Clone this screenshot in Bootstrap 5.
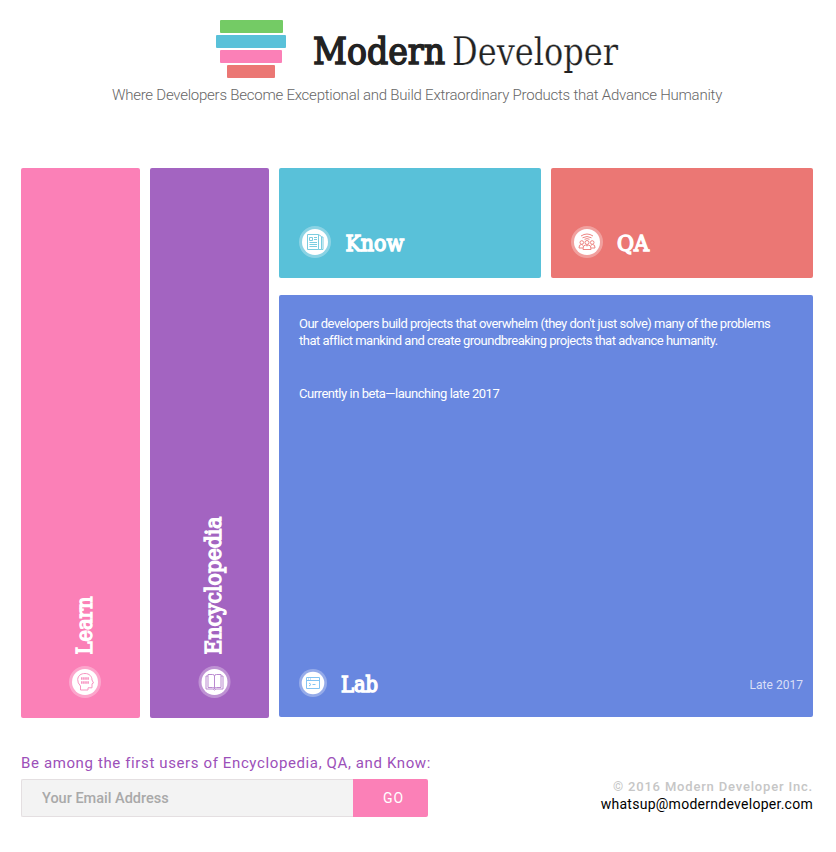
<!DOCTYPE html>
<html lang="en">
<head>
<meta charset="utf-8">
<meta name="viewport" content="width=device-width, initial-scale=1">
<title>Modern Developer</title>
<link rel="stylesheet" href="https://cdn.jsdelivr.net/npm/bootstrap@5.3.0/dist/css/bootstrap.min.css">
<style>
body{font-family:Roboto,"Liberation Sans",sans-serif;color:#222;background:#fff}
svg{display:block;flex:none;overflow:visible}
.page{width:792px;margin-left:21px;padding-top:20px}
.masthead{padding-left:195px;height:58px}
.slab{font-family:"Roboto Slab","DejaVu Serif Condensed","DejaVu Serif",serif;font-size:21.5px;font-weight:400;fill:#fff;stroke:#fff;stroke-width:1.3px;stroke-linejoin:miter}
.logo-bold{font-size:38px;fill:#222;stroke:#222;stroke-width:1.5px}
.logo-thin{font-size:39px;fill:#222;stroke:#fff;stroke-width:.25px}
.tagline{font-size:15px;font-weight:300;line-height:20px;margin-top:7px;color:#666;letter-spacing:-.235px;white-space:nowrap}
.tiles{margin-top:63px;gap:10px}
.tile{border-radius:2px;color:#fff}
.strip{width:119px;height:550px;padding:0 0 20px 9px}
.short{width:262px;height:110px;padding:0 20px 20px}
.right-side{width:534px;gap:17px}
.lab{height:422px;padding:20px}
.lab-copy{font-size:13px;line-height:17px;letter-spacing:-.5px;white-space:nowrap}
.lab-note{margin-top:36px;letter-spacing:-.47px}
.late{font-size:12px;letter-spacing:.03px;margin-right:-10px;padding-top:4px;color:#d9dff7}
.pink{background:#fb80b7}.purple{background:#a364c1}.cyan{background:#59c1d9}.coral{background:#eb7774}.blue{background:#6887e0}
.signup-title{font-size:15px;line-height:20px;letter-spacing:.62px;color:#9c50b9;white-space:nowrap;margin-bottom:6px}
.bottom{margin-top:35px}
.email{width:332px;height:38px;border:1px solid #e4dfe1;border-right:0;border-radius:2px 0 0 2px;background:#f3f3f3;padding:0 20px;font-size:14.5px;font-weight:500}
.email::placeholder{color:#a9a9a9;opacity:1}
.go{width:75px;height:38px;border:0;border-radius:0 2px 2px 0;color:#fff;font-size:14px;letter-spacing:1px;padding:0 0 0 6px}
.legal{font-size:13px;font-weight:500;letter-spacing:.82px;color:#c6c6c6;line-height:17px}
.mail{font-size:14px;line-height:18px;color:#000;letter-spacing:.27px}
.mail:hover{color:#000}
</style>
<script src="https://cdn.jsdelivr.net/npm/bootstrap@5.3.0/dist/js/bootstrap.bundle.min.js"></script>
</head>
<body>
<div class="page">
<header>
  <div class="masthead d-flex">
    <svg width="402" height="58" role="img" aria-label="Modern Developer">
      <rect x="4" y="0" width="63" height="13" rx="1" fill="#74cb65"/>
      <rect x="0" y="15" width="70" height="13" rx="1" fill="#59c1d9"/>
      <rect x="4" y="30" width="62" height="13" rx="1" fill="#fb80b7"/>
      <rect x="11" y="45" width="48" height="13" rx="1" fill="#eb7774"/>
      <text class="slab logo-bold" x="97" y="44" textLength="132" lengthAdjust="spacingAndGlyphs">Modern</text>
      <text class="slab logo-thin" x="236" y="44.5" textLength="166" lengthAdjust="spacingAndGlyphs">Developer</text>
    </svg>
  </div>
  <div class="tagline text-center">Where Developers Become Exceptional and Build Extraordinary Products that Advance Humanity</div>
</header>
<main class="tiles d-flex">
  <section class="tile strip pink d-flex flex-column align-items-center justify-content-end">
    <svg width="32" height="59"><text class="slab" transform="translate(23 58.500) rotate(-90)" textLength="58" lengthAdjust="spacingAndGlyphs">Learn</text></svg>
    <svg class="mt-2 pt-0" width="32" height="35" viewBox="0 -3 32 35"><circle cx="16" cy="16" r="16" fill="#fff" opacity=".3"/><circle cx="16" cy="16" r="13" fill="#fff"/>
      <g fill="none" stroke="#f795c2" stroke-width="1"><path d="M11.5 24V20Q8.500 17 8.700 13.500C9 9.500 12 7.500 16 7.500c4.500 0 7 3 7 6.500l1.500 3-1.500.8v4h-4V24z"/><path d="M12 12.500h8M12 16.500h8" stroke-width="2.600" stroke-dasharray="1.600 .5"/></g></svg>
  </section>
  <section class="tile strip purple d-flex flex-column align-items-center justify-content-end">
    <svg width="32" height="140"><text class="slab" transform="translate(22.500 139.500) rotate(-90)" textLength="138" lengthAdjust="spacingAndGlyphs">Encyclopedia</text></svg>
    <svg class="mt-2" width="32" height="35" viewBox="-.5 -3 32 35"><circle cx="16" cy="16" r="16" fill="#fff" opacity=".3"/><circle cx="16" cy="16" r="13" fill="#fff"/>
      <g fill="none" stroke="#ba8ad0" stroke-width="1"><path d="M9.500 8.500h4.500q2 0 2 1.500 0-1.500 2-1.500h4.500v13h-4.500q-2 0-2 1.500 0-1.500-2-1.500H9.500zM16 10v13M9.500 10H7.500v13h7l1.500 1 1.500-1h7V10h-2"/></g></svg>
  </section>
  <div class="right-side d-flex flex-column">
    <div class="d-flex justify-content-between">
      <section class="tile short cyan d-flex align-items-end">
        <svg width="32" height="32" viewBox="0 0 32 32"><circle cx="16" cy="16" r="16" fill="#fff" opacity=".3"/><circle cx="16" cy="16" r="13" fill="#fff"/>
          <g fill="none" stroke="#7bcde0" stroke-width="1"><path d="M8.500 8.500h11v15h-11zM19.500 8.500l3 2v13h-3M22.500 11h1.500v12.500h-1.500"/><path d="M10.500 11.500h3v3h-3zM15 11.500h3M15 13.500h3M10.500 16.500h7.500M10.500 18.500h7.500M10.500 20.500h7.500"/></g></svg>
        <svg class="ms-3" width="60" height="32"><text class="slab" x="-1.500" y="24.500" textLength="58.500" lengthAdjust="spacingAndGlyphs">Know</text></svg>
      </section>
      <section class="tile short coral d-flex align-items-end">
        <svg width="32" height="32" viewBox="0 0 32 32"><circle cx="16" cy="16" r="16" fill="#fff" opacity=".3"/><circle cx="16" cy="16" r="13" fill="#fff"/>
          <g fill="none" stroke="#ee8683" stroke-width="1"><path d="M10 10q6-4 12 0M11.500 11.800q4.500-2.600 9 0M13.500 13.300q2.500-1.300 5 0"/><circle cx="16" cy="16.500" r="2"/><circle cx="10.800" cy="16.500" r="1.800"/><circle cx="21.200" cy="16.500" r="1.800"/><path d="M12 23.500l.5-3.500 2-.9 1.500.9 1.500-.9 2 .9.500 3.500zM12 22H8l.5-2.700 2-.8 1.700.8M20 22H24l-.5-2.700-2-.8-1.700.8"/></g></svg>
        <svg class="ms-3" width="34" height="32"><text class="slab" x="-2" y="24.500" textLength="32" lengthAdjust="spacingAndGlyphs">QA</text></svg>
      </section>
    </div>
    <section class="tile lab blue d-flex flex-column justify-content-between">
      <div class="lab-copy">Our developers build projects that overwhelm (they don't just solve) many of the problems<br>that afflict mankind and create groundbreaking projects that advance humanity.<div class="lab-note">Currently in beta—launching late 2017</div></div>
      <div class="d-flex align-items-center">
        <svg width="28" height="28" viewBox="0 0 28 28"><circle cx="14" cy="14" r="14" fill="#fff" opacity=".3"/><circle cx="14" cy="14" r="11.300" fill="#fff"/>
          <g fill="none" stroke="#83c4f3" stroke-width="1"><path d="M7.500 8.500h13v11h-13zM7.500 11.500h13M9 10h1M11 10h1M10 14l2 1.500-2 1.500M13.500 15.500h3"/></g></svg>
        <svg class="ms-3" width="40" height="28"><text class="slab" x="-2" y="22.500" textLength="37" lengthAdjust="spacingAndGlyphs">Lab</text></svg>
        <span class="late ms-auto">Late 2017</span>
      </div>
    </section>
  </div>
</main>
<footer class="bottom d-flex justify-content-between align-items-end">
  <form>
    <label class="signup-title d-block" for="email">Be among the first users of Encyclopedia, QA, and Know:</label>
    <div class="d-flex"><input id="email" class="email" type="email" placeholder="Your Email Address"><button class="go pink" type="button">GO</button></div>
  </form>
  <div class="text-end pb-1">
    <div class="legal">© 2016 Modern Developer Inc.</div>
    <a class="mail d-block text-decoration-none" href="#">whatsup@moderndeveloper.com</a>
  </div>
</footer>
</div>
</body>
</html>
